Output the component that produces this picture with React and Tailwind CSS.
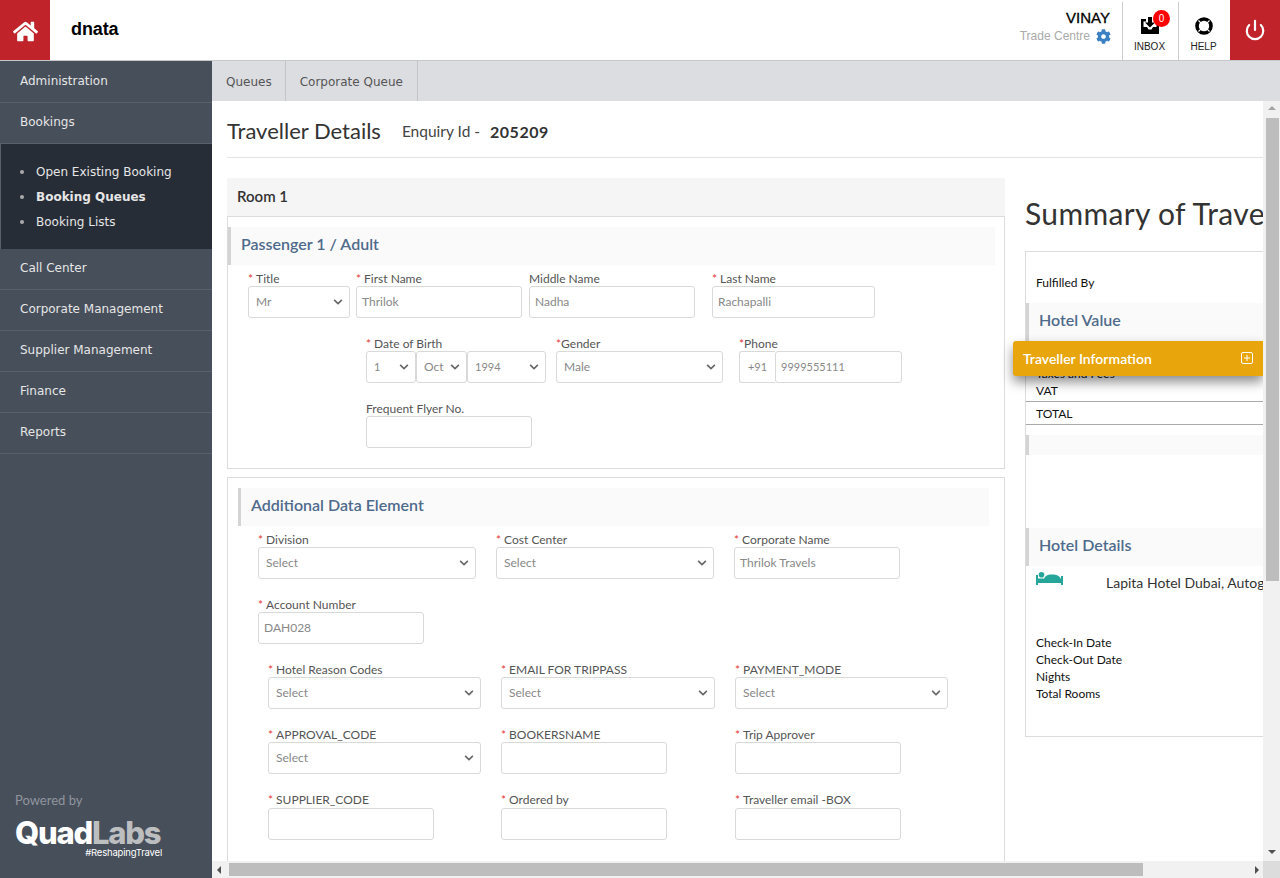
import React from 'react'
import { FaHome, FaCog, FaChevronDown } from 'react-icons/fa'
import { Power } from 'lucide-react'

const sidebarFont = "font-['DejaVu_Sans',sans-serif]"

const Req = () => <span className="text-[#e53935] mr-[3px]">*</span>

// label + control stack used by every form row
const Field = ({ label, required, tight, offset, children }) => (
  <div className={offset}>
    <div className="h-[14px] leading-[14px] text-[12px] text-[#555] whitespace-nowrap">
      {required && (tight ? <span className="text-[#e53935]">*</span> : <Req />)}
      {label}
    </div>
    {children}
  </div>
)

const Select = ({ value, width, small }) => (
  <div className={`${width} ${small ? 'text-[11px]' : 'text-[12px]'} rounded-[3px] h-[32px] border border-[#d9d9d9] bg-white flex items-center justify-between pl-[7px] pr-[6px] text-[#888]`}>
    <span>{value}</span>
    <FaChevronDown className="text-[#666] w-[10px] h-[10px]" />
  </div>
)

const Input = ({ value, width, small, className = '' }) => (
  <div className={`${width} ${small ? 'text-[11px]' : 'text-[12px]'} ${className} h-[32px] rounded-[3px] border border-[#d9d9d9] bg-white flex items-center pl-[5px] text-[#888]`}>
    {value}
  </div>
)

const SectionHead = ({ children, className }) => (
  <div className={`h-[38px] pb-[4px] bg-[#fafafa] border-l-[3px] border-[#d4d4d4] flex items-center font-semibold text-[16px] text-[#4f6b8c] ${className}`}>
    {children}
  </div>
)

const Sidebar = () => {
  const rest = ['Call Center', 'Corporate Management', 'Supplier Management', 'Finance', 'Reports']
  const Item = ({ title, first }) => (
    <div className={`${first ? 'h-[42px]' : 'h-[41px]'} pl-[20px] pb-[2px] flex items-center border-b border-[#59606b] text-[12px] text-[#e6e6e6]`}>
      {title}
    </div>
  )
  return (
    <aside className={`w-[212px] shrink-0 bg-[#474f5b] flex flex-col justify-between ${sidebarFont}`}>
      <div>
        <Item first title="Administration" />
        <Item title="Bookings" />
        <ul className="h-[105px] bg-[#272d37] border-l border-[#59606b] pl-[19px] pt-[15px] text-[12px] text-[#e6e6e6]">
          {['Open Existing Booking', 'Booking Queues', 'Booking Lists'].map((t, i) => (
            <li key={t} className={`h-[25px] flex items-center ${i === 1 ? 'font-bold' : ''}`}>
              <span className="w-[4px] h-[4px] rounded-full bg-[#aaa] mr-[12px]" />
              {t}
            </li>
          ))}
        </ul>
        {rest.map((t) => <Item key={t} title={t} />)}
      </div>
      <div className="pl-[15px] pb-[20px] font-['Lato',sans-serif]">
        <div className="text-[13px] leading-[14px] text-[#8f959e] mb-[12px]">Powered by</div>
        <div className="w-[147px] font-['Inter',sans-serif] leading-none">
          <div className="text-[31px] font-extrabold tracking-[-1.25px] h-[28px] leading-[28px]">
            <span className="text-white">Quad</span><span className="text-[#bcbec0]">Labs</span>
          </div>
          <div className="text-[9.5px] leading-[10px] text-white text-right tracking-[-0.2px] mt-[1px]">#ReshapingTravel</div>
        </div>
      </div>
    </aside>
  )
}

const Header = () => (
  <header className="h-[61px] shrink-0 border-b border-[#c8c8c8] bg-white flex items-stretch font-['Liberation_Sans',sans-serif]">
    <div className="w-[50px] bg-[#c1232b] flex items-center justify-center">
      <FaHome className="text-white w-[25px] h-[25px] mt-[2px]" />
    </div>
    <div className="ml-[21px] self-center text-[18px] font-bold text-black mb-[2px] tracking-[-0.1px]">dnata</div>
    <div className="ml-auto mr-[12px] text-right pt-[9px]">
      <div className="text-[15px] leading-[17px] text-black [-webkit-text-stroke:0.3px_black]">VINAY</div>
      <div className="flex items-center justify-end mt-[1px] text-[12px] text-[#aaa]">
        Trade Centre
        <FaCog className="ml-[6px] mr-[-1px] w-[15px] h-[15px] text-[#3b7fc4]" />
      </div>
    </div>
    <div className="w-[56px] pr-[2px] mt-[2px] border-l border-[#ccc] flex flex-col items-center relative">
      <svg viewBox="0 0 18 17" className="w-[18px] h-[17px] mt-[15px]" fill="#000">
        <path d="M0 2h5v2.500H2.500V10H6l1.500 2.500h3L12 10h3.500V4.500H13V2h5v15H0z" />
        <path d="M7 0h4v5.500h3L9 10.500 4 5.500h3z" />
      </svg>
      <div className="absolute top-[8px] left-[30px] w-[17px] h-[17px] rounded-full bg-[#f00] text-white text-[10px] leading-[17px] text-center">0</div>
      <div className="text-[10px] text-[#222] mt-[7px] leading-[12px]">INBOX</div>
    </div>
    <div className="w-[52px] pr-[2px] mt-[2px] border-l border-[#ccc] flex flex-col items-center">
      <svg viewBox="0 0 18 18" className="w-[18px] h-[18px] mt-[15px]">
        <circle cx="9" cy="9" r="7" fill="none" stroke="#000" strokeWidth="3.600" />
        <path d="M3.500 3.500l2.600 2.600M14.500 3.500L11.900 6.100M3.500 14.500l2.600-2.600M14.500 14.500l-2.600-2.600" stroke="#fff" strokeWidth="1.200" />
      </svg>
      <div className="text-[10px] text-[#222] mt-[6px] leading-[12px]">HELP</div>
    </div>
    <div className="w-[50px] bg-[#c1232b] flex items-center justify-center">
      <Power className="text-white w-[22px] h-[22px]" strokeWidth={2.4} />
    </div>
  </header>
)

const PassengerBox = () => (
  <div className="h-[253px] border border-[#dcdcdc] pt-[10px]">
    <SectionHead className="w-[767px] pl-[10px]">Passenger 1 / Adult</SectionHead>
    <div className="flex mt-[7px]">
      <Field required label="Title" offset="ml-[20px] mr-[6px]"><Select value="Mr" width="w-[102px]" /></Field>
      <Field required label="First Name" offset="mr-[7px]"><Input value="Thrilok" width="w-[166px]" /></Field>
      <Field label="Middle Name" offset="mr-[17px]"><Input value="Nadha" width="w-[166px]" /></Field>
      <Field required label="Last Name"><Input value="Rachapalli" width="w-[163px]" /></Field>
    </div>
    <div className="flex mt-[19px]">
      <Field required label="Date of Birth" offset="ml-[138px] mr-[10px]">
        <div className="flex">
          <Select small value="1" width="w-[50px]" />
          <Select value="Oct" width="w-[51px]" />
          <Select small value="1994" width="w-[79px]" />
        </div>
      </Field>
      <Field required tight label="Gender" offset="mr-[16px]"><Select value="Male" width="w-[167px]" /></Field>
      <Field required tight label="Phone">
        <div className="flex">
          <div className="w-[36px] h-[32px] border border-[#d9d9d9] border-r-0 rounded-l-[3px] flex items-center justify-center text-[11px] text-[#888]">+91</div>
          <Input small value="9999555111" width="w-[127px]" />
        </div>
      </Field>
    </div>
    <div className="flex mt-[19px]">
      <Field label="Frequent Flyer No." offset="ml-[138px]"><Input width="w-[166px]" /></Field>
    </div>
  </div>
)

const AdditionalBox = () => (
  <div className="mt-[8px] h-[500px] border border-[#dcdcdc] pt-[10px]">
    <SectionHead className="w-[751px] ml-[10px] pl-[10px]">Additional Data Element</SectionHead>
    <div className="flex mt-[7px]">
      <Field required label="Division" offset="ml-[30px] mr-[20px]"><Select value="Select" width="w-[218px]" /></Field>
      <Field required label="Cost Center" offset="mr-[20px]"><Select value="Select" width="w-[218px]" /></Field>
      <Field required label="Corporate Name"><Input value="Thrilok Travels" width="w-[166px]" /></Field>
    </div>
    <div className="flex mt-[19px]">
      <Field required label="Account Number" offset="ml-[30px]"><Input value="DAH028" width="w-[166px]" /></Field>
    </div>
    <div className="flex mt-[19px]">
      <Field required label="Hotel Reason Codes" offset="ml-[40px] mr-[20px]"><Select value="Select" width="w-[213px]" /></Field>
      <Field required label="EMAIL FOR TRIPPASS" offset="mr-[20px]"><Select value="Select" width="w-[214px]" /></Field>
      <Field required label="PAYMENT_MODE"><Select value="Select" width="w-[213px]" /></Field>
    </div>
    <div className="flex mt-[19px]">
      <Field required label="APPROVAL_CODE" offset="ml-[40px] mr-[20px]"><Select value="Select" width="w-[213px]" /></Field>
      <Field required label="BOOKERSNAME" offset="mr-[68px]"><Input width="w-[166px]" /></Field>
      <Field required label="Trip Approver"><Input width="w-[166px]" /></Field>
    </div>
    <div className="flex mt-[19px]">
      <Field required label="SUPPLIER_CODE" offset="ml-[40px] mr-[67px]"><Input className="mt-[1px]" width="w-[166px]" /></Field>
      <Field required label="Ordered by" offset="mr-[68px]"><Input className="mt-[1px]" width="w-[166px]" /></Field>
      <Field required label="Traveller email -BOX"><Input className="mt-[1px]" width="w-[166px]" /></Field>
    </div>
  </div>
)

const SummaryRow = ({ children, line, className = '' }) => (
  <div className={`pl-[10px] text-[12px] text-[#111] whitespace-nowrap ${line ? 'border-b border-[#aaa]' : ''} ${className}`}>
    {children}
  </div>
)

const Summary = () => (
  <div className="ml-[20px] w-[420px] shrink-0">
    <div className="h-[73px] pt-[18px] text-[30px] leading-[34px] tracking-[0.35px] text-[#333] whitespace-nowrap">Summary of Traveller</div>
    <div className="h-[486px] border border-[#dcdcdc] border-r-0">
      <SummaryRow className="pt-[24px] h-[51px] leading-[14px]">Fulfilled By</SummaryRow>
      <SectionHead className="pl-[10px]">Hotel Value</SectionHead>
      <SummaryRow className="h-[24px] flex items-end leading-[14px]">Base Fare</SummaryRow>
      <SummaryRow className="h-[17px] leading-[17px]">Taxes and Fees</SummaryRow>
      <SummaryRow line className="h-[20px] leading-[17px]">VAT</SummaryRow>
      <SummaryRow line className="h-[23px] leading-[24px]">TOTAL</SummaryRow>
      <div className="mt-[10px] h-[20px] bg-[#fafafa] border-l-[3px] border-[#d4d4d4]" />
      <div className="mt-[73px]">
        <SectionHead className="pl-[10px]">Hotel Details</SectionHead>
      </div>
      <div className="flex pl-[10px] pt-[6px] h-[68px]">
        <svg viewBox="0 0 27 13" className="w-[27px] h-[13px] shrink-0" fill="#26a69a">
          <circle cx="5.500" cy="2.800" r="2.800" />
          <path d="M0 3h2v4h23V4h2v9h-2v-2H2v2H0z" />
          <path d="M8 8c0-3.500 3-5.500 8-5.500s9 2 9 5.500zM1 6.500h8v2H1z" />
        </svg>
        <div className="ml-[43px] mt-[3px] text-[14px] text-[#333] whitespace-nowrap leading-[16px]">Lapita Hotel Dubai, Autograph Collection</div>
      </div>
      {['Check-In Date', 'Check-Out Date', 'Nights', 'Total Rooms'].map((t) => (
        <SummaryRow key={t} className="h-[17px] leading-[17px]">{t}</SummaryRow>
      ))}
    </div>
  </div>
)

const ScrollV = () => (
  <div className="w-[17px] shrink-0 bg-[#f1f1f1] flex flex-col items-center relative">
    <div className="mt-[5px] w-0 h-0 border-x-[4px] border-x-transparent border-b-[4px] border-b-[#a3a3a3]" />
    <div className="mt-[8px] w-[13px] ml-[1px] h-[463px] bg-[#bdbdbd]" />
    <div className="mt-auto mb-[7px] w-0 h-0 border-x-[4px] border-x-transparent border-t-[4px] border-t-[#505050]" />
  </div>
)

const ScrollH = () => (
  <div className="h-[17px] shrink-0 flex">
    <div className="flex-1 bg-[#f1f1f1] flex items-center">
      <div className="ml-[5px] w-0 h-0 border-y-[4px] border-y-transparent border-r-[4px] border-r-[#505050]" />
      <div className="ml-[8px] w-[914px] h-[13px] bg-[#bdbdbd]" />
      <div className="ml-auto mr-[4px] w-0 h-0 border-y-[4px] border-y-transparent border-l-[4px] border-l-[#505050]" />
    </div>
    <div className="w-[17px] bg-[#dcdcdc]" />
  </div>
)

export default function App() {
  return (
    <div className="w-[1280px] h-[878px] flex flex-col overflow-hidden bg-white font-['Lato',sans-serif]">
      <Header />
      <div className="flex flex-1 min-h-0">
        <Sidebar />
        <main className="flex-1 min-w-0 flex flex-col">
          <nav className={`h-[40px] shrink-0 bg-[#dcdde1] flex text-[12px] text-[#555] ${sidebarFont}`}>
            <div className="pl-[14px] pr-[13px] pt-[2px] flex items-center border-r border-[#c4c4c4]">Queues</div>
            <div className="px-[14px] pt-[2px] flex items-center border-r border-[#c4c4c4]">Corporate Queue</div>
          </nav>
          <div className="flex-1 min-h-0 flex">
            <div className="flex-1 min-w-0 overflow-hidden relative pl-[15px]">
              <div className="h-[57px] border-b border-[#e3e3e3] flex items-center pt-[4px]">
                <h1 className="text-[22px] text-[#333] mb-[1px]">Traveller Details</h1>
                <span className="ml-[21px] mt-[1px] text-[15.500px] text-[#444]">Enquiry Id -</span>
                <span className="ml-[10px] mt-[1px] text-[16px] tracking-[0.5px] font-bold text-[#333]">205209</span>
              </div>
              <div className="flex mt-[20px]">
                <div className="w-[778px] shrink-0">
                  <div className="h-[38px] pb-[2px] bg-[#f5f5f5] flex items-center pl-[10px] font-semibold text-[15px] text-[#333]">Room 1</div>
                  <PassengerBox />
                  <AdditionalBox />
                </div>
                <Summary />
              </div>
              {/* floating panel, stays over the summary column */}
              <div className="absolute top-[240px] left-[801px] w-[250px] h-[35px] pb-[1px] bg-[#e8a60c] rounded-l-[3px] shadow-[0_6px_12px_rgba(0,0,0,0.45)] flex items-center justify-between pl-[10px] pr-[10px] text-[14px] font-semibold text-white">
                Traveller Information
                <svg viewBox="0 0 12 12" className="w-[12px] h-[12px]" fill="none" stroke="#fff" strokeWidth="1">
                  <rect x="0.500" y="0.500" width="11" height="11" rx="1.500" />
                  <path d="M6 3v6M3 6h6" />
                </svg>
              </div>
            </div>
            <ScrollV />
          </div>
          <ScrollH />
        </main>
      </div>
    </div>
  )
}
